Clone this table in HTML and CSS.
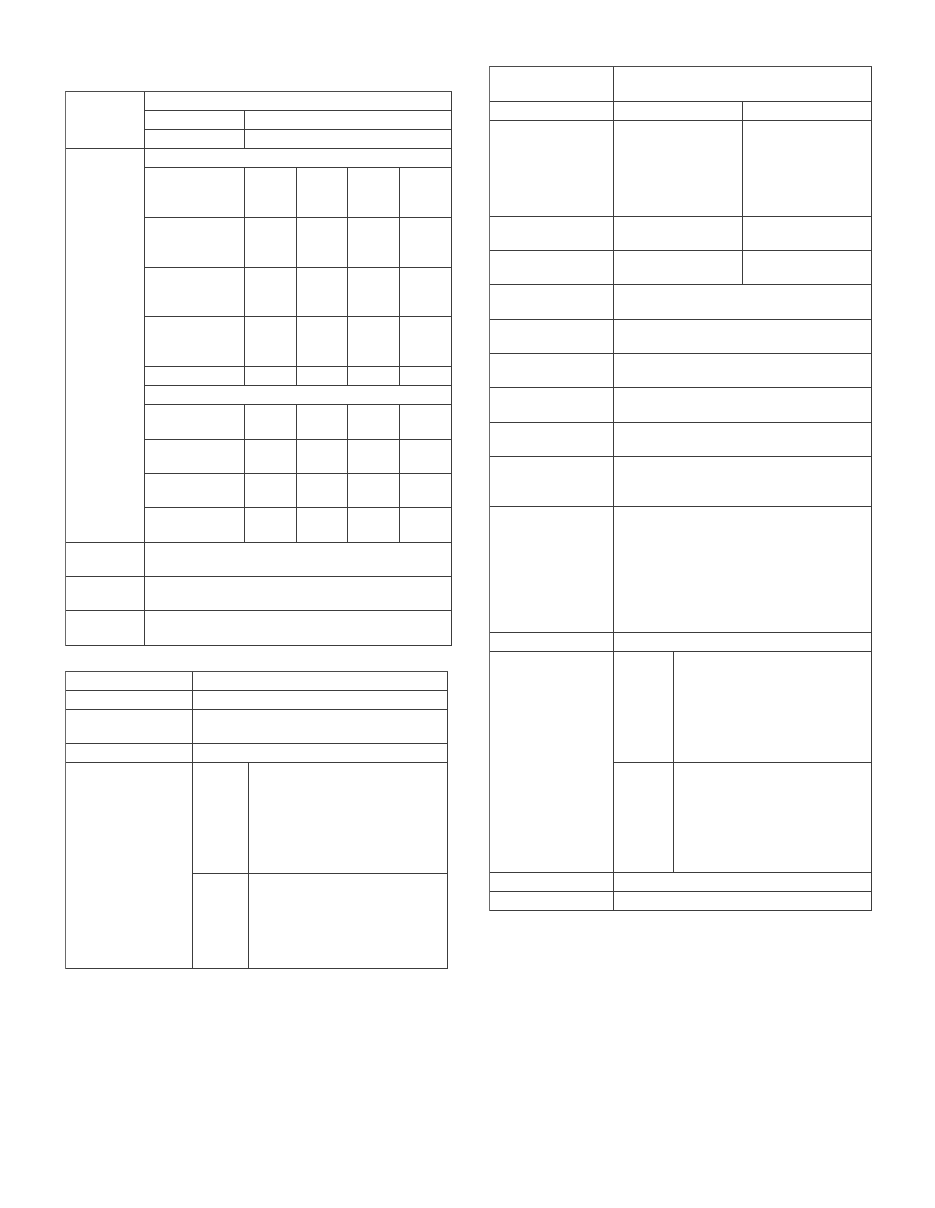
FILE: index.html
```html
<!DOCTYPE html>
<html lang="en">
<head>
<meta charset="utf-8">
<title>Tables</title>
<link rel="stylesheet" href="styles.css">
</head>
<body>
<div class="page">
  <div class="col-left">
    <div class="grid grid-a">
      <div class="c r3"></div><div class="c s5"></div>
      <div class="c"></div><div class="c s4"></div>
      <div class="c"></div><div class="c s4"></div>
      <div class="c r11"></div><div class="c s5"></div>
      <div class="c"></div><div class="c"></div><div class="c"></div><div class="c"></div><div class="c"></div>
      <div class="c"></div><div class="c"></div><div class="c"></div><div class="c"></div><div class="c"></div>
      <div class="c"></div><div class="c"></div><div class="c"></div><div class="c"></div><div class="c"></div>
      <div class="c"></div><div class="c"></div><div class="c"></div><div class="c"></div><div class="c"></div>
      <div class="c"></div><div class="c"></div><div class="c"></div><div class="c"></div><div class="c"></div>
      <div class="c s5"></div>
      <div class="c"></div><div class="c"></div><div class="c"></div><div class="c"></div><div class="c"></div>
      <div class="c"></div><div class="c"></div><div class="c"></div><div class="c"></div><div class="c"></div>
      <div class="c"></div><div class="c"></div><div class="c"></div><div class="c"></div><div class="c"></div>
      <div class="c"></div><div class="c"></div><div class="c"></div><div class="c"></div><div class="c"></div>
      <div class="c"></div><div class="c s5"></div>
      <div class="c"></div><div class="c s5"></div>
      <div class="c"></div><div class="c s5"></div>
    </div>
    <div class="grid grid-b">
      <div class="c"></div><div class="c s2"></div>
      <div class="c"></div><div class="c s2"></div>
      <div class="c"></div><div class="c s2"></div>
      <div class="c"></div><div class="c s2"></div>
      <div class="c r2"></div><div class="c"></div><div class="c"></div>
      <div class="c"></div><div class="c"></div>
    </div>
  </div>
  <div class="col-right">
    <div class="grid grid-c">
      <div class="c"></div><div class="c s3"></div>
      <div class="c"></div><div class="c s2"></div><div class="c"></div>
      <div class="c"></div><div class="c s2"></div><div class="c"></div>
      <div class="c"></div><div class="c s2"></div><div class="c"></div>
      <div class="c"></div><div class="c s2"></div><div class="c"></div>
      <div class="c"></div><div class="c s3"></div>
      <div class="c"></div><div class="c s3"></div>
      <div class="c"></div><div class="c s3"></div>
      <div class="c"></div><div class="c s3"></div>
      <div class="c"></div><div class="c s3"></div>
      <div class="c"></div><div class="c s3"></div>
      <div class="c"></div><div class="c s3"></div>
      <div class="c"></div><div class="c s3"></div>
      <div class="c r2"></div><div class="c"></div><div class="c s2"></div>
      <div class="c"></div><div class="c s2"></div>
      <div class="c"></div><div class="c s3"></div>
      <div class="c"></div><div class="c s3"></div>
    </div>
  </div>
</div>
</body>
</html>
```

FILE: styles.css
```css
html, body {
  margin: 0;
  padding: 0;
  background: #ffffff;
  font-family: "Liberation Sans", Arial, sans-serif;
}

.page {
  display: flex;
  align-items: flex-start;
  padding-left: 65px;
  column-gap: 37px;
}

.col-left {
  display: flex;
  flex-direction: column;
  align-items: flex-start;
  padding-top: 91px;
  row-gap: 25px;
}

.col-right {
  padding-top: 66px;
}

.grid {
  display: grid;
  border-top: 1px solid #4a4a4a;
  border-left: 1px solid #6a6a6a;
}

.c {
  border-right: 1px solid #3c3c3c;
  border-bottom: 1px solid #3c3c3c;
}

.grid-a {
  grid-template-columns: 79px 100px 52px 51px 52px 52px;
  grid-template-rows: 19px 19px 19px 19px 50px 50px 49px 50px 19px 19px 35px 34px 34px 35px 34px 34px 35px;
}

.grid-b {
  grid-template-columns: 127px 56px 199px;
  grid-template-rows: 19px 19px 34px 19px 111px 95px;
}

.grid-c {
  grid-template-columns: 124px 60px 69px 129px;
  grid-template-rows: 35px 19px 96px 34px 34px 35px 34px 34px 35px 34px 50px 126px 19px 111px 110px 19px 19px;
}

.s2 { grid-column: span 2; }
.s3 { grid-column: span 3; }
.s4 { grid-column: span 4; }
.s5 { grid-column: span 5; }
.r2 { grid-row: span 2; }
.r3 { grid-row: span 3; }
.r11 { grid-row: span 11; }
```
